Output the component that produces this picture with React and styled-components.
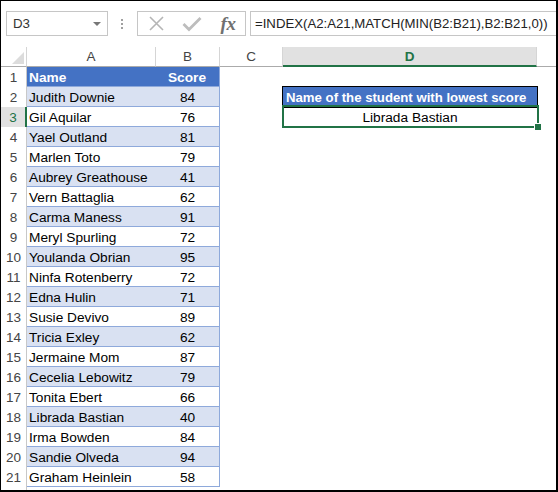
import React from "react";
import styled, { createGlobalStyle, css } from "styled-components";

const Global = createGlobalStyle`
  html, body { margin: 0; padding: 0; background: #fff; }
  * { box-sizing: border-box; }
`;

const GREEN = "#217346";
const BLUE = "#4472c4";
const BAND = "#d9e1f2";
const TBORDER = "#8ea9db";

const Frame = styled.div`
  width: 558px;
  height: 492px;
  border: 1px solid #000;
  border-right-width: 2px;
  border-bottom-width: 2px;
  background: #fff;
  overflow: hidden;
  display: flex;
  flex-direction: column;
  font-family: "Liberation Sans", Arial, sans-serif;
`;

const FormulaBar = styled.div`
  display: flex;
  align-items: center;
  height: 25px;
  margin-top: 10px;
  padding-left: 5px;
  flex: none;
`;

const NameBox = styled.div`
  width: 102px;
  height: 25px;
  border: 1px solid #c6c6c6;
  display: flex;
  align-items: center;
  justify-content: space-between;
  padding: 0 6px 0 6px;
  font-size: 13.3px;
  color: #333;
`;

const Arrow = styled.span`
  width: 0;
  height: 0;
  border-left: 4px solid transparent;
  border-right: 4px solid transparent;
  border-top: 4px solid #777;
`;

const Grip = styled.div`
  margin: 0 14px 0 13px;
  display: flex;
  flex-direction: column;
  gap: 2px;
`;

const Dot = styled.span`
  width: 2px;
  height: 2px;
  background: #a0a0a0;
`;

const FxBox = styled.div`
  width: 109px;
  height: 25px;
  border: 1px solid #c6c6c6;
  display: flex;
  align-items: center;
  padding-left: 8px;
`;

const IconSlot = styled.span`
  width: ${(p) => p.$w}px;
  display: flex;
  align-items: center;
  justify-content: center;
`;

const Fx = styled.span`
  font-family: "Liberation Serif", "Times New Roman", serif;
  font-style: italic;
  font-weight: bold;
  font-size: 19px;
  color: #707070;
  letter-spacing: -0.5px;
  line-height: 1;
`;

const FormulaInput = styled.div`
  flex: 1;
  height: 25px;
  margin-left: 4px;
  border: 1px solid #c6c6c6;
  border-right: none;
  display: flex;
  align-items: center;
  padding-left: 4px;
  font-size: 13.2px;
  color: #222;
  white-space: nowrap;
  overflow: hidden;
`;

const Sheet = styled.div`
  margin-top: 11px;
  flex: 1;
  display: flex;
  flex-direction: column;
`;

const Row = styled.div`
  display: flex;
  height: 20px;
  flex: none;
`;

const FillRow = styled.div`
  display: flex;
  flex: 1;
`;

const widths = { num: 26, A: 129, B: 64, C: 63, D: 254 };

const Corner = styled.div`
  width: ${widths.num}px;
  height: 20px;
  border-right: 1px solid #d5d5d5;
  border-bottom: 1px solid #ababab;
  display: flex;
  align-items: flex-end;
  justify-content: flex-end;
  padding: 0 2px 2px 0;
`;

const ColHead = styled.div`
  width: ${(p) => (p.$w ? `${p.$w}px` : "auto")};
  flex: ${(p) => (p.$w ? "none" : "1")};
  height: 20px;
  border-right: ${(p) => (p.$w ? "1px solid #d5d5d5" : "none")};
  border-bottom: 1px solid #ababab;
  display: flex;
  align-items: center;
  justify-content: center;
  font-size: 13.5px;
  color: #444;
  ${(p) =>
    p.$active &&
    css`
      background: #e1e1e1;
      color: ${GREEN};
      font-weight: bold;
      border-bottom: 2px solid ${GREEN};
    `}
`;

const RowNum = styled.div`
  width: ${widths.num}px;
  flex: none;
  border-right: 1px solid #c8c8c8;
  display: flex;
  align-items: center;
  justify-content: center;
  font-size: 13.5px;
  color: #444;
  ${(p) =>
    p.$active &&
    css`
      background: #e1e1e1;
      color: ${GREEN};
      border-right: 2px solid ${GREEN};
    `}
`;

const Cell = styled.div`
  width: ${(p) => (p.$w ? `${p.$w}px` : "auto")};
  flex: ${(p) => (p.$w ? "none" : "1")};
  height: 20px;
  display: flex;
  align-items: center;
  justify-content: ${(p) => (p.$center ? "center" : "flex-start")};
  padding-left: ${(p) => (p.$center ? 0 : 2)}px;
  padding-top: 1px;
  font-size: 13.7px;
  color: #000;
  white-space: nowrap;
  position: relative;
`;

const TableCell = styled(Cell)`
  background: ${(p) => (p.$head ? BLUE : p.$band ? BAND : "#fff")};
  color: ${(p) => (p.$head ? "#fff" : "#000")};
  font-weight: ${(p) => (p.$head ? "bold" : "normal")};
  border-bottom: 1px solid ${TBORDER};
  border-right: ${(p) => (p.$edge ? `1px solid ${TBORDER}` : "none")};
`;

const HeadSplit = styled(TableCell)`
  justify-content: space-between;
`;

const ResultHead = styled(Cell)`
  background: ${BLUE};
  color: #fff;
  font-weight: bold;
  font-size: 13.2px;
  padding-left: 3px;
  box-shadow: 0 0 0 1px #000;
  z-index: 1;
`;

const Selection = styled.div`
  position: absolute;
  left: -1px;
  right: -2px;
  top: -2px;
  bottom: -1px;
  border: 2px solid ${GREEN};
  z-index: 2;
  pointer-events: none;
`;

const Handle = styled.span`
  position: absolute;
  right: -4px;
  bottom: -4px;
  width: 7px;
  height: 7px;
  background: ${GREEN};
  border: 1px solid #fff;
  border-right: none;
  border-bottom: none;
`;

const data = [
  ["Judith Downie", 84],
  ["Gil Aquilar", 76],
  ["Yael Outland", 81],
  ["Marlen Toto", 79],
  ["Aubrey Greathouse", 41],
  ["Vern Battaglia", 62],
  ["Carma Maness", 91],
  ["Meryl Spurling", 72],
  ["Youlanda Obrian", 95],
  ["Ninfa Rotenberry", 72],
  ["Edna Hulin", 71],
  ["Susie Devivo", 89],
  ["Tricia Exley", 62],
  ["Jermaine Mom", 87],
  ["Cecelia Lebowitz", 79],
  ["Tonita Ebert", 66],
  ["Librada Bastian", 40],
  ["Irma Bowden", 84],
  ["Sandie Olveda", 94],
  ["Graham Heinlein", 58],
];

function DCell({ row }) {
  if (row === 2)
    return <ResultHead $w={widths.D}>Name of the student with lowest score</ResultHead>;
  if (row === 3)
    return (
      <Cell $w={widths.D} $center>
        Librada Bastian
        <Selection>
          <Handle />
        </Selection>
      </Cell>
    );
  return <Cell $w={widths.D} />;
}

export default function App() {
  return (
    <Frame>
      <Global />
      <FormulaBar>
        <NameBox>
          <span>D3</span>
          <Arrow />
        </NameBox>
        <Grip>
          <Dot />
          <Dot />
          <Dot />
        </Grip>
        <FxBox>
          <IconSlot $w={20}>
            <svg width="15" height="15" viewBox="0 0 15 15">
              <path d="M1 1 L14 14 M14 1 L1 14" stroke="#b5b5b5" strokeWidth="1.6" fill="none" />
            </svg>
          </IconSlot>
          <IconSlot $w={52}>
            <svg width="20" height="16" viewBox="0 0 20 16">
              <path d="M1.5 8 L7 13.5 L18.5 2" stroke="#bdbdbd" strokeWidth="2.8" fill="none" />
            </svg>
          </IconSlot>
          <IconSlot $w={20}>
            <Fx>fx</Fx>
          </IconSlot>
        </FxBox>
        <FormulaInput>=INDEX(A2:A21,MATCH(MIN(B2:B21),B2:B21,0))</FormulaInput>
      </FormulaBar>
      <Sheet>
        <Row>
          <Corner>
            <svg width="12" height="12" viewBox="0 0 12 12">
              <polygon points="12,0 12,12 0,12" fill="#dcdcdc" />
            </svg>
          </Corner>
          <ColHead $w={widths.A}>A</ColHead>
          <ColHead $w={widths.B}>B</ColHead>
          <ColHead $w={widths.C}>C</ColHead>
          <ColHead $w={widths.D} $active>D</ColHead>
          <ColHead />
        </Row>
        <Row>
          <RowNum>1</RowNum>
          <HeadSplit $w={widths.A + widths.B} $head $edge>
            <span>Name</span>
            <span style={{ paddingRight: 13 }}>Score</span>
          </HeadSplit>
          <Cell $w={widths.C} />
          <DCell row={1} />
          <Cell />
        </Row>
        {data.map(([name, score], i) => {
          const r = i + 2;
          const band = r % 2 === 0;
          return (
            <Row key={r}>
              <RowNum $active={r === 3}>{r}</RowNum>
              <TableCell $w={widths.A} $band={band}>
                {name}
              </TableCell>
              <TableCell $w={widths.B} $band={band} $center $edge>
                {score}
              </TableCell>
              <Cell $w={widths.C} />
              <DCell row={r} />
              <Cell />
            </Row>
          );
        })}
        <FillRow>
          <RowNum />
        </FillRow>
      </Sheet>
    </Frame>
  );
}
